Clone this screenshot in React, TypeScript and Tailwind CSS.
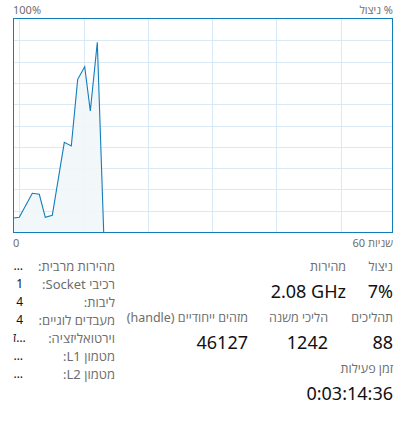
import React from "react";

const pts: [number, number][] = [
  [0, 199],
  [5.3, 198.3],
  [18.3, 174.3],
  [25.3, 175.3],
  [31.3, 198.3],
  [38.3, 196.3],
  [50.3, 123.3],
  [57.3, 127],
  [63.7, 60.3],
  [70.7, 47.7],
  [76.3, 92],
  [83.3, 23.3],
  [89.7, 213],
];

function Chart() {
  const W = 378;
  const H = 213;
  const vx = [5, 70, 134, 198, 262, 327];
  const hy = [1, 2, 3, 4, 5, 6, 7, 8, 9].map((k) => Math.round((H * k) / 10) + 0.5);
  const line = pts.map((p) => p.join(",")).join(" ");
  const area = line + ` ${pts[pts.length - 1][0]},${H} 0,${H}`;
  return (
    <div className="h-[215px] w-[380px] border border-[#117dbb] bg-white">
      <svg width={W} height={H} viewBox={`0 0 ${W} ${H}`} className="block">
        {vx.map((x) => (
          <line key={"v" + x} x1={x + 0.5} y1={0} x2={x + 0.5} y2={H} stroke="#d9eaf4" strokeWidth={1} />
        ))}
        {hy.map((y) => (
          <line key={"h" + y} x1={0} y1={y} x2={W} y2={y} stroke="#d9eaf4" strokeWidth={1} />
        ))}
        <polygon points={area} fill="#f1f6fa" fillOpacity={0.9} />
        <polyline points={line} fill="none" stroke="#117dbb" strokeWidth={1.1} strokeLinejoin="miter" />
      </svg>
    </div>
  );
}

function Stat({ label, value, w }: { label: string; value: string; w?: string }) {
  return (
    <div className={`flex shrink-0 flex-col ${w ?? ""}`}>
      <div className="h-[20px] text-[12.5px] leading-[20px] text-[#6d6d6d] whitespace-nowrap">{label}</div>
      <div dir="ltr" className="h-[28px] text-right text-[18px] leading-[28px] text-[#111] whitespace-nowrap">
        {value}
      </div>
    </div>
  );
}

function Row({ label, value }: { label: string; value: string }) {
  return (
    <div className="flex h-[18px] items-center justify-between leading-[18px]">
      <span className="text-[13px] text-[#6d6d6d] whitespace-nowrap">{label}</span>
      <span dir="ltr" className="w-[10px] text-right text-[12px] text-[#111] whitespace-nowrap">
        {value}
      </span>
    </div>
  );
}

export default function App() {
  return (
    <div
      dir="rtl"
      className="h-[434px] w-[411px] bg-white pl-[13px] pr-[18px] font-['Segoe_UI','Noto_Sans','Open_Sans','Liberation_Sans',sans-serif]"
    >
      <div className="flex h-[18px] items-center justify-between pt-[1px] text-[11px] leading-[15px] text-[#6d6d6d]">
        <span>% ניצול</span>
        <span>100%</span>
      </div>
      <Chart />
      <div className="flex h-[15px] items-center justify-between pt-[3px] text-[11px] leading-[15px] text-[#6d6d6d]">
        <span className="flex gap-[3px]">
          <span>שניות</span>
          <span>60</span>
        </span>
        <span>0</span>
      </div>
      <div className="mt-[9px] flex justify-between">
        <div className="flex flex-col">
          <div className="flex">
            <Stat label="ניצול" value="7%" w="w-[47px]" />
            <Stat label="מהירות" value="2.08 GHz" />
          </div>
          <div className="mt-[3px] flex">
            <Stat label="תהליכים" value="88" w="w-[65px]" />
            <Stat label="הליכי משנה" value="1242" w="w-[80px]" />
            <Stat label="מזהים ייחודיים (handle)" value="46127" />
          </div>
          <div className="mt-[3px] flex">
            <Stat label="זמן פעילות" value="0:03:14:36" />
          </div>
        </div>
        <div className="flex w-[102px] flex-col">
          <Row label="מהירות מרבית:" value="…" />
          <Row label="רכיבי Socket:" value="1" />
          <Row label="ליבות:" value="4" />
          <Row label="מעבדים לוגיים:" value="4" />
          <Row label="וירטואליזציה:" value="ז…" />
          <Row label="מטמון L1:" value="…" />
          <Row label="מטמון L2:" value="…" />
        </div>
      </div>
    </div>
  );
}
